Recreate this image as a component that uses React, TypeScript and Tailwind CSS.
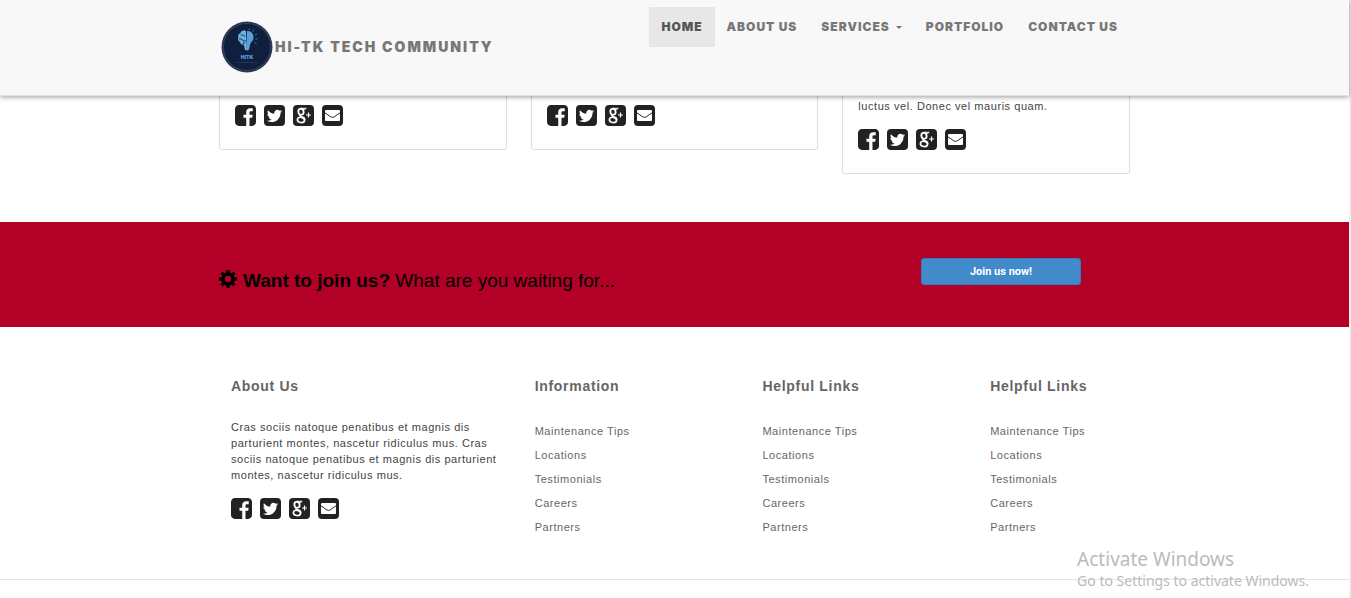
import type { ReactNode } from "react";

const navItems = ["Home", "About Us", "Services", "Portfolio", "Contact Us"];

const columns = [
  { title: "Information", span: "col-span-3" },
  { title: "Helpful Links", span: "col-span-3" },
  { title: "Helpful Links", span: "col-span-2" },
];

const links = ["Maintenance Tips", "Locations", "Testimonials", "Careers", "Partners"];

function FacebookIcon() {
  return (
    <svg viewBox="0 128 1536 1536" className="size-[21px]" fill="currentColor" aria-hidden="true">
      <path d="M1248 128q119 0 203.5 84.5t84.5 203.5v960q0 119-84.5 203.5t-203.5 84.5h-188v-595h199l30-232h-229v-148q0-56 23.5-84t91.5-28l122-1v-207q-63-9-178-9-136 0-217.5 80t-81.5 226v171h-200v232h200v595h-532q-119 0-203.5-84.5t-84.5-203.5v-960q0-119 84.5-203.5t203.5-84.5h960z" />
    </svg>
  );
}

function TwitterIcon() {
  return (
    <svg viewBox="0 0 1536 1536" className="size-[21px]" fill="currentColor" aria-hidden="true">
      <rect width="1536" height="1536" rx="288" />
      <path
        fill="#fff"
        transform="translate(-64 -64) scale(1.08)"
        d="M1280 482q-56 25-121 34 68-40 93-117-65 38-134 51-61-66-153-66-87 0-148.5 61.5t-61.5 148.5q0 29 5 48-129-7-242-65t-192-155q-29 50-29 106 0 114 91 175-47-1-100-26v1q0 75 50 133.5t123 72.5q-29 8-51 8-13 0-39-4 21 63 74.5 104t121.5 42q-116 90-261 90-26 0-50-3 148 94 322 94 112 0 210-35.5t168-95 120.5-137 75-162 24.5-168.5q0-18-1-27 63-45 105-109z"
      />
    </svg>
  );
}

function GooglePlusIcon() {
  return (
    <svg viewBox="0 0 21 21" className="size-[21px]" fill="none" stroke="#fff" aria-hidden="true">
      <rect width="21" height="21" rx="4" fill="currentColor" stroke="none" />
      <ellipse cx="8" cy="6.800" rx="2.600" ry="3" strokeWidth="1.800" transform="rotate(-14 8 6.800)" />
      <path d="M8 3.300h5.200L11.800 4.400H10" strokeWidth="1" />
      <path d="M7.600 9.800q-1.400 1.300.8 2.200" strokeWidth="1.600" />
      <ellipse cx="8" cy="14.900" rx="3.600" ry="2.600" strokeWidth="1.700" transform="rotate(8 8 14.900)" />
      <path d="M8.200 11.600q3.400.9 3.500 3.200" strokeWidth="1.700" />
      <path d="M15.500 7.500v5M13 10h5" strokeWidth="1.200" />
    </svg>
  );
}

function MailIcon() {
  return (
    <svg viewBox="0 0 21 21" className="size-[21px]" fill="currentColor" aria-hidden="true">
      <rect width="21" height="21" rx="4" />
      <rect x="3" y="5" width="15" height="11" rx="1" fill="#fff" />
      <path d="M2.500 7.500q3.800 2.500 5.800 4.100 2.200 1.700 4.400 0 2-1.600 5.800-4.100" fill="none" stroke="currentColor" strokeWidth="1" />
    </svg>
  );
}

function SocialLinks() {
  const items: [string, ReactNode][] = [
    ["Facebook", <FacebookIcon />],
    ["Twitter", <TwitterIcon />],
    ["Google Plus", <GooglePlusIcon />],
    ["Email", <MailIcon />],
  ];
  return (
    <div className="flex gap-2 text-[#222]">
      {items.map(([label, icon]) => (
        <a key={label} href="#" aria-label={label}>
          {icon}
        </a>
      ))}
    </div>
  );
}

function Logo() {
  return (
    <svg viewBox="0 0 52 52" className="size-[52px]" aria-hidden="true">
      <circle cx="26" cy="26" r="25.500" fill="#2b3653" />
      <circle cx="26" cy="26" r="23.500" fill="#101f3e" stroke="#3d4b68" strokeWidth=".6" />
      <path d="M25 10c-3-1-5 0-5.500 2-2 .5-2.800 2.500-2 4-1 2-.5 4 1.500 5 .3 2 2 3.500 4 3.300L24 29h2z" fill="#6db3e6" />
      <path d="M26 10c4-.5 7 3 6.500 7-.4 3.500-3.500 4.500-3.500 7.500l-1 4-2 1.500z" fill="#5c9fd8" />
      <path d="M19.500 14h3l1.500 2M18 18h3l1 2h3M21 23h2v-2" stroke="#101f3e" strokeWidth=".8" fill="none" />
      <path d="M28 9l.8-1.500M31.500 10.500l1.500-2M34 14l2-1.200M34.500 18h2.200M33.500 21.500l2 1.200" stroke="#4e86b8" strokeWidth=".8" />
      <text x="26" y="38" textAnchor="middle" fontSize="5" fontWeight="900" fill="#5ba3dc" className="font-['Inter',sans-serif] tracking-normal">
        HITK
      </text>
      <path d="M15 41.500h22" stroke="#2a3c5e" strokeWidth="1" strokeDasharray="1.500 .6" />
    </svg>
  );
}

function GearIcon() {
  return (
    <svg viewBox="0 0 18 18" className="mb-1 size-[18px]" aria-hidden="true">
      <g fill="#000">
        <rect x="7.300" y="0" width="3.400" height="18" />
        <rect x="7.300" y="0" width="3.400" height="18" transform="rotate(45 9 9)" />
        <rect x="7.300" y="0" width="3.400" height="18" transform="rotate(90 9 9)" />
        <rect x="7.300" y="0" width="3.400" height="18" transform="rotate(135 9 9)" />
        <circle cx="9" cy="9" r="6.800" />
      </g>
      <circle cx="9" cy="9" r="3.200" fill="#b30027" />
    </svg>
  );
}

const card = "rounded-[3px] border border-[#ddd] px-[15px] pb-[23px]";

export default function App() {
  return (
    <div className="relative min-h-screen border-r-2 border-[#f0f0f0] bg-white font-['Liberation_Sans',Arial,sans-serif] text-[11px] leading-4 text-[#444]">
      <header className="absolute inset-x-0 top-0 z-10 border-b border-[#e0e0e0] bg-[#f8f8f8] font-['Inter',sans-serif] shadow-[0_1px_5px_rgba(0,0,0,0.4)]">
        <div className="mx-auto flex h-[95px] max-w-[911px] items-start justify-between">
          <a href="#" className="flex items-center gap-0.5 pt-[21px] pl-[2px] text-sm font-black tracking-[2px] text-[#777]">
            <Logo />
            <span>HI-TK TECH COMMUNITY</span>
          </a>
          <nav className="flex pt-[7px]">
            {navItems.map((item) => (
              <a
                key={item}
                href="#"
                className={`flex h-10 items-center px-3 text-xs font-black tracking-[1px] uppercase ${
                  item === "Home" ? "bg-[#e7e7e7] text-[#555]" : "text-[#777]"
                }`}
              >
                {item}
                {item === "Services" && (
                  <svg viewBox="0 0 6 3" className="ml-1.5 h-[3px] w-1.5" fill="currentColor" aria-hidden="true">
                    <path d="M0 0h6L3 3z" />
                  </svg>
                )}
              </a>
            ))}
          </nav>
        </div>
      </header>

      <main>
        <section className="mx-auto grid max-w-[911px] grid-cols-3 items-start gap-6 pt-20 pb-12">
          <article className={`${card} pt-6`}>
            <SocialLinks />
          </article>
          <article className={`${card} pt-6`}>
            <SocialLinks />
          </article>
          <article className={`${card} pt-[17px]`}>
            <p className="mb-[15px] tracking-wider">luctus vel. Donec vel mauris quam.</p>
            <SocialLinks />
          </article>
        </section>

        <section className="bg-[#b30027] pt-9 pb-[34px]">
          <div className="mx-auto grid max-w-[911px] grid-cols-12">
            <h2 className="col-span-9 flex items-center gap-1.5 pt-[11px] text-[19px] leading-6 text-black">
              <GearIcon />
              <span>
                <strong>Want to join us?</strong> What are you waiting for...
              </span>
            </h2>
            <button
              type="button"
              className="col-span-3 mr-[49px] h-[27px] w-40 justify-self-end rounded-[3px] border border-[#357ebd] bg-[#428bca] font-['Roboto',sans-serif] text-[11px] font-bold text-white"
            >
              Join us now!
            </button>
          </div>
        </section>
      </main>

      <footer>
        <div className="mx-auto grid max-w-[911px] grid-cols-12 pt-[49px] pb-10">
          <section className="col-span-4 px-3">
            <h3 className="text-sm leading-5 font-bold tracking-wider text-[#666]">About Us</h3>
            <p className="mt-[23px] mb-[15px] tracking-wider">
              Cras sociis natoque penatibus et magnis dis parturient montes, nascetur ridiculus mus. Cras sociis natoque
              penatibus et magnis dis parturient montes, nascetur ridiculus mus.
            </p>
            <SocialLinks />
          </section>
          {columns.map(({ title, span }, index) => (
            <section key={index} className={`${span} px-3`}>
              <h3 className="text-sm leading-5 font-bold tracking-wider text-[#666]">{title}</h3>
              <ul className="mt-[23px]">
                {links.map((link) => (
                  <li key={link}>
                    <a href="#" className="leading-6 tracking-wider text-[#666]">
                      {link}
                    </a>
                  </li>
                ))}
              </ul>
            </section>
          ))}
        </div>
        <div className="h-[18px] border-t border-[#e5e5e5]" />
      </footer>

      <aside className="absolute right-10 bottom-2 font-['Noto_Sans',sans-serif] text-[#bbb]">
        <p className="text-[19px] leading-[26px]">Activate Windows</p>
        <p className="text-sm leading-[18px]">Go to Settings to activate Windows.</p>
      </aside>
    </div>
  );
}
